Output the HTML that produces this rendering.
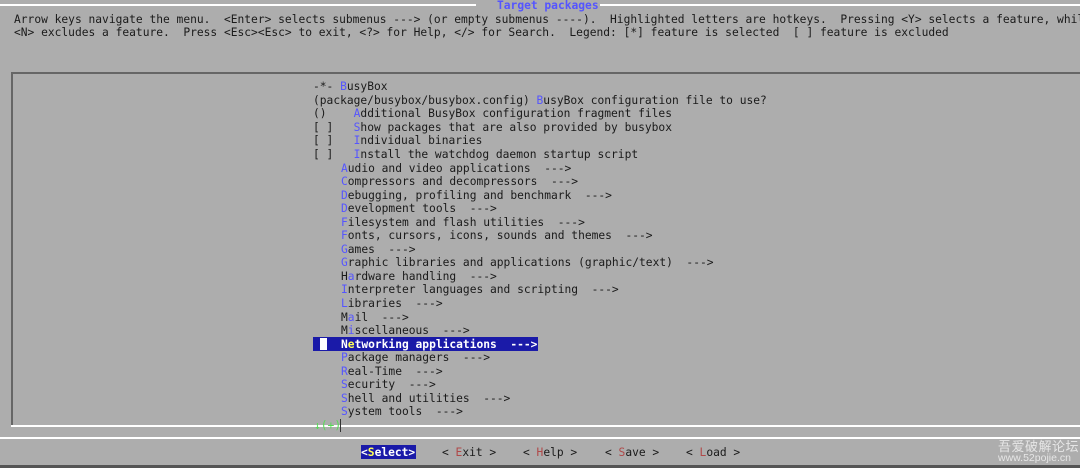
<!DOCTYPE html><html><head><meta charset="utf-8"><style>
body{margin:0;width:1080px;height:468px;background:#adadad;overflow:hidden;position:relative;font-family:"DejaVu Sans Mono","Liberation Mono",monospace;font-size:11.25px;color:#1a1a1a}
.l{position:absolute;white-space:pre;line-height:13.54px;height:13.54px;margin-top:1px}
.b{color:#5555ff}.r{color:#b04848}.y{color:#ffff55}
</style></head><body>
<div style="position:absolute;left:0;top:4px;width:476px;height:2px;background:#fff"></div>
<div style="position:absolute;left:600px;top:4px;width:480px;height:2px;background:#fff"></div>
<div class="l b" style="left:497px;top:-2px;font-weight:bold">Target packages</div>
<div class="l" style="left:14px;top:11.7px">Arrow keys navigate the menu.  &lt;Enter&gt; selects submenus ---&gt; (or empty submenus ----).  Highlighted letters are hotkeys.  Pressing &lt;Y&gt; selects a feature, while</div>
<div class="l" style="left:14px;top:25.3px">&lt;N&gt; excludes a feature.  Press &lt;Esc&gt;&lt;Esc&gt; to exit, &lt;?&gt; for Help, &lt;/&gt; for Search.  Legend: [*] feature is selected  [ ] feature is excluded</div>
<div style="position:absolute;left:11px;top:72px;width:1069px;height:2px;background:#666"></div>
<div style="position:absolute;left:11px;top:72px;width:2px;height:354px;background:#666"></div>
<div style="position:absolute;left:11px;top:425px;width:1069px;height:2px;background:#fff"></div>
<div style="position:absolute;left:0;top:437px;width:1080px;height:2px;background:#fff"></div>
<div style="position:absolute;left:0;top:465px;width:1080px;height:3px;background:#555"></div>
<div style="position:absolute;left:313px;top:337.4px;width:225px;height:13.5px;background:#1a1aa8"></div>
<div style="position:absolute;left:320px;top:338.4px;width:7px;height:12px;background:#fff"></div>
<div class="l" style="left:313px;top:79.2px">-*- <span class="b">B</span>usyBox</div>
<div class="l" style="left:313px;top:92.8px">(package/busybox/busybox.config) <span class="b">B</span>usyBox configuration file to use?</div>
<div class="l" style="left:313px;top:106.3px">()    <span class="b">A</span>dditional BusyBox configuration fragment files</div>
<div class="l" style="left:313px;top:119.9px">[ ]   <span class="b">S</span>how packages that are also provided by busybox</div>
<div class="l" style="left:313px;top:133.4px">[ ]   <span class="b">I</span>ndividual binaries</div>
<div class="l" style="left:313px;top:147px">[ ]   <span class="b">I</span>nstall the watchdog daemon startup script</div>
<div class="l" style="left:341px;top:160.5px"><span class="b">A</span>udio and video applications  ---&gt;</div>
<div class="l" style="left:341px;top:174px"><span class="b">C</span>ompressors and decompressors  ---&gt;</div>
<div class="l" style="left:341px;top:187.6px"><span class="b">D</span>ebugging, profiling and benchmark  ---&gt;</div>
<div class="l" style="left:341px;top:201.1px"><span class="b">D</span>evelopment tools  ---&gt;</div>
<div class="l" style="left:341px;top:214.7px"><span class="b">F</span>ilesystem and flash utilities  ---&gt;</div>
<div class="l" style="left:341px;top:228.2px"><span class="b">F</span>onts, cursors, icons, sounds and themes  ---&gt;</div>
<div class="l" style="left:341px;top:241.8px"><span class="b">G</span>ames  ---&gt;</div>
<div class="l" style="left:341px;top:255.3px"><span class="b">G</span>raphic libraries and applications (graphic/text)  ---&gt;</div>
<div class="l" style="left:341px;top:268.9px">H<span class="b">a</span>rdware handling  ---&gt;</div>
<div class="l" style="left:341px;top:282.4px"><span class="b">I</span>nterpreter languages and scripting  ---&gt;</div>
<div class="l" style="left:341px;top:296px"><span class="b">L</span>ibraries  ---&gt;</div>
<div class="l" style="left:341px;top:309.5px">M<span class="b">a</span>il  ---&gt;</div>
<div class="l" style="left:341px;top:323px">M<span class="b">i</span>scellaneous  ---&gt;</div>
<div class="l" style="left:341px;top:336.6px;color:#fff;font-weight:bold">N<span class="y">e</span>tworking applications  ---&gt;</div>
<div class="l" style="left:341px;top:350.1px"><span class="b">P</span>ackage managers  ---&gt;</div>
<div class="l" style="left:341px;top:363.7px"><span class="b">R</span>eal-Time  ---&gt;</div>
<div class="l" style="left:341px;top:377.2px"><span class="b">S</span>ecurity  ---&gt;</div>
<div class="l" style="left:341px;top:390.8px"><span class="b">S</span>hell and utilities  ---&gt;</div>
<div class="l" style="left:341px;top:404.3px"><span class="b">S</span>ystem tools  ---&gt;</div>
<div class="l" style="left:314px;top:418px;color:#55dd55">↓(+)</div>
<div style="position:absolute;left:340px;top:419px;width:1px;height:13px;background:#333"></div>
<div style="position:absolute;left:361px;top:445px;width:55px;height:14px;background:#1a1aa8"></div>
<div class="l" style="left:361px;top:445px;color:#fff;font-weight:bold">&lt;<span class="y">S</span>elect&gt;</div>
<div class="l" style="left:442px;top:445px">&lt; <span class="r">E</span>xit &gt;</div>
<div class="l" style="left:523px;top:445px">&lt; <span class="r">H</span>elp &gt;</div>
<div class="l" style="left:605px;top:445px">&lt; <span class="r">S</span>ave &gt;</div>
<div class="l" style="left:686px;top:445px">&lt; <span class="r">L</span>oad &gt;</div>
<div style="position:absolute;left:998px;top:436px;font-family:'Noto Sans CJK SC',sans-serif;font-size:13px;color:#e6e6e6;letter-spacing:0.5px">吾爱破解论坛</div>
<div style="position:absolute;left:998px;top:452px;font-family:'Liberation Sans',sans-serif;font-size:10.5px;color:#e6e6e6">www.52pojie.cn</div>
</body></html>
